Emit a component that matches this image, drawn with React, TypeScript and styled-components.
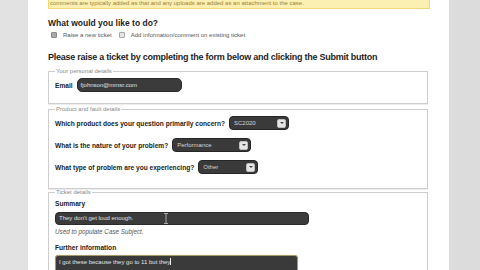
import React from "react";
import styled, { createGlobalStyle } from "styled-components";

const Global = createGlobalStyle`
  html, body { margin: 0; padding: 0; }
  body { background: #dcdcdc; font-family: "Liberation Sans", Arial, sans-serif; }
  * { box-sizing: border-box; }
`;

const Shell = styled.div`
  display: flex;
  width: 480px;
  height: 270px;
  overflow: hidden;
`;

const Gutter = styled.div<{ $w?: number; $bg: string }>`
  flex: ${(p) => (p.$w ? `0 0 ${p.$w}px` : "1 1 auto")};
  background: ${(p) => p.$bg};
`;

const Main = styled.div`
  flex: 0 0 421px;
  background: #fff;
  padding: 0 21px 0 20px;
  display: flex;
  flex-direction: column;
  & > * { flex-shrink: 0; }
`;

const Banner = styled.div`
  height: 9px;
  margin-right: -2px;
  background: #fcefb2;
  border-bottom: 1px solid #f2d873;
  border-left: 1px solid #f2d873;
  border-right: 1px solid #f2d873;
  color: #9b7f3a;
  font-size: 6px;
  line-height: 7px;
  padding-left: 1px;
  white-space: nowrap;
  overflow: hidden;
`;

const Heading = styled.div<{ $mt: number; $size: number; $ls?: number }>`
  margin-top: ${(p) => p.$mt}px;
  font-size: ${(p) => p.$size}px;
  letter-spacing: ${(p) => p.$ls ?? 0}px;
  line-height: 11px;
  font-weight: bold;
  color: #1e1e1e;
  white-space: nowrap;
`;

const RadioRow = styled.div`
  margin-top: 2px;
  display: flex;
  align-items: center;
  height: 8px;
  padding-left: 3px;
  font-size: 6px;
  color: #555;
  gap: 3px;
`;

const Radio = styled.span<{ $on?: boolean }>`
  display: inline-block;
  width: 6px;
  height: 6px;
  border-radius: 1px;
  border: 1px solid ${(p) => (p.$on ? "#8a8a8a" : "#a8a8a8")};
  background: ${(p) => (p.$on ? "#a9a9a9" : "#e4e4e4")};
  margin-right: 3px;
`;

const RadioLabel = styled.span`
  margin-right: 4px;
  white-space: nowrap;
`;

const Fieldset = styled.fieldset<{ $mt: number; $pt: number; $pb: number }>`
  margin: ${(p) => p.$mt}px 0 0 0;
  padding: ${(p) => p.$pt}px 6px ${(p) => p.$pb}px 6px;
  border: 1px solid #cdcdcd;
  box-shadow: 0 1px 0 #ececec;
  min-width: 0;
`;

const Legend = styled.legend`
  font-size: 6px;
  line-height: 7px;
  color: #8a8a8a;
  padding: 0 1px;
`;

const FieldRow = styled.div<{ $mt?: number }>`
  display: flex;
  align-items: center;
  gap: 4px;
  height: 14px;
  margin-top: ${(p) => p.$mt ?? 0}px;
`;

const Label = styled.div<{ $mt?: number }>`
  font-size: 6.6px;
  font-weight: bold;
  color: #222;
  line-height: 9px;
  white-space: nowrap;
  margin-top: ${(p) => p.$mt ?? 0}px;
`;

const DarkInput = styled.div<{ $w: number; $h: number; $r: number; $mt?: number }>`
  width: ${(p) => p.$w}px;
  height: ${(p) => p.$h}px;
  margin-top: ${(p) => p.$mt ?? 0}px;
  border-radius: ${(p) => p.$r}px;
  background: #3b3b3b;
  border: 1px solid #2a2a2a;
  color: #e0e0e0;
  font-size: 6px;
  line-height: ${(p) => p.$h - 2}px;
  padding-left: 3px;
  white-space: nowrap;
  position: relative;
`;

const SelectBox = styled.div<{ $w: number }>`
  width: ${(p) => p.$w}px;
  height: 14px;
  border-radius: 4px;
  background: #3a3a3a;
  border: 1px solid #262626;
  color: #d6d6d6;
  font-size: 6px;
  display: flex;
  align-items: center;
  justify-content: space-between;
  padding: 0 2px 0 4px;
`;

const Arrow = styled.span`
  width: 9px;
  height: 9px;
  border-radius: 2px;
  background: #e6e6e6;
  border: 1px solid #bdbdbd;
  display: flex;
  align-items: center;
  justify-content: center;
  &::after {
    content: "";
    border-left: 2px solid transparent;
    border-right: 2px solid transparent;
    border-top: 2px solid #444;
  }
`;

const Hint = styled.div`
  margin-top: 2px;
  font-size: 6.3px;
  font-style: italic;
  color: #555;
  line-height: 9px;
`;

const TextArea = styled.div`
  margin-top: 3px;
  width: 243px;
  height: 30px;
  border-radius: 3px;
  background: #3a3a3a;
  border: 1px solid #a39a6a;
  box-shadow: 0 0 1px #d8cc8a;
  color: #e4e4e4;
  font-size: 6px;
  line-height: 12px;
  padding-left: 3px;
`;

const Caret = styled.span`
  display: inline-block;
  width: 1px;
  height: 7px;
  background: #eee;
  vertical-align: -1px;
`;

const IBeam = styled.svg`
  position: absolute;
  left: 108px;
  top: 0px;
`;

function Select({ w, value }: { w: number; value: string }) {
  return (
    <SelectBox $w={w}>
      <span>{value}</span>
      <Arrow />
    </SelectBox>
  );
}

export default function App() {
  return (
    <>
      <Global />
      <Shell>
        <Gutter $w={28} $bg="#e2e2e2" />
        <Main>
          <Banner>
            comments are typically added as that and any uploads are added as an attachment to the case.
          </Banner>
          <Heading $mt={9} $size={8.5}>What would you like to do?</Heading>
          <RadioRow>
            <Radio $on />
            <RadioLabel>Raise a new ticket</RadioLabel>
            <Radio />
            <RadioLabel>Add information/comment on existing ticket</RadioLabel>
          </RadioRow>
          <Heading $mt={13} $size={9} $ls={-0.25}>
            Please raise a ticket by completing the form below and clicking the Submit button
          </Heading>
          <Fieldset $mt={5} $pt={3} $pb={11}>
            <Legend>Your personal details</Legend>
            <FieldRow>
              <Label>Email</Label>
              <DarkInput $w={105} $h={14} $r={5}>fjohnson@mmsr.com</DarkInput>
            </FieldRow>
          </Fieldset>
          <Fieldset $mt={2} $pt={3} $pb={14}>
            <Legend>Product and fault details</Legend>
            <FieldRow>
              <Label>Which product does your question primarily concern?</Label>
              <Select w={60} value="SC2020" />
            </FieldRow>
            <FieldRow $mt={8}>
              <Label>What is the nature of your problem?</Label>
              <Select w={79} value="Performance" />
            </FieldRow>
            <FieldRow $mt={8}>
              <Label>What type of problem are you experiencing?</Label>
              <Select w={60} value="Other" />
            </FieldRow>
          </Fieldset>
          <Fieldset $mt={0} $pt={3} $pb={4}>
            <Legend>Ticket details</Legend>
            <Label>Summary</Label>
            <DarkInput $w={254} $h={13} $r={4} $mt={4}>
              They don't get loud enough.
              <IBeam width="4" height="11" viewBox="0 0 4 11">
                <path d="M0 0.5h4M2 0.5v10M0 10.5h4" stroke="#aaa" strokeWidth="1" fill="none" />
              </IBeam>
            </DarkInput>
            <Hint>Used to populate Case Subject.</Hint>
            <Label $mt={7}>Further information</Label>
            <TextArea>
              I got these because they go to 11 but they<Caret />
            </TextArea>
          </Fieldset>
        </Main>
        <Gutter $bg="#dcdcdc" />
      </Shell>
    </>
  );
}
